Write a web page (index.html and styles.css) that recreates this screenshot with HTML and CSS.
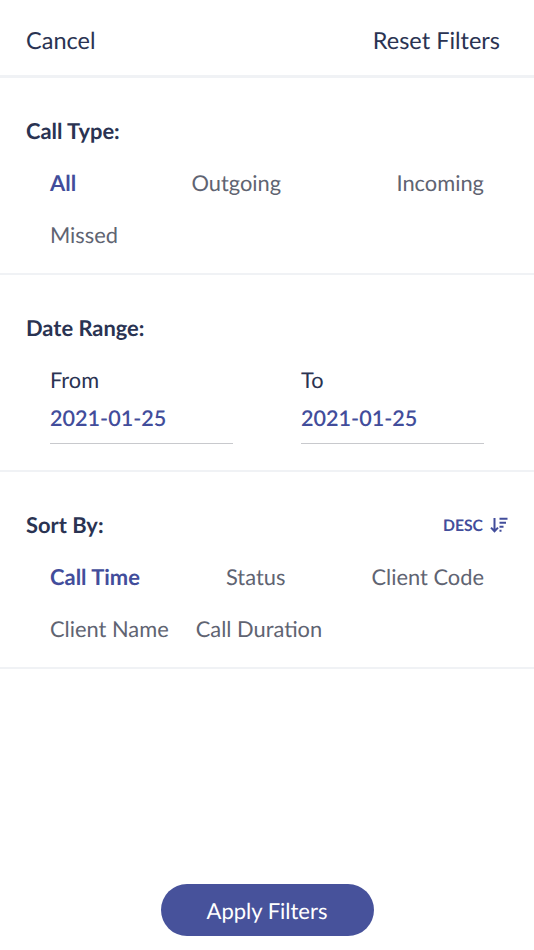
FILE: index.html
```html
<!DOCTYPE html>
<html lang="en">

<head>
    <meta charset="UTF-8">
    <meta name="viewport" content="width=device-width, initial-scale=1.0">
    <title>Filters</title>
    <link rel="stylesheet" href="styles.css">
</head>

<body>

    <div class="page">
        <div class="top-bar">
            <span>Cancel</span>
            <span>Reset Filters</span>
        </div>

        <!-- Call type -->
        <section class="filter-section">
            <div class="section-head">
                <h2>Call Type:</h2>
            </div>
            <div class="option-row spread">
                <span class="option active">All</span>
                <span class="option">Outgoing</span>
                <span class="option">Incoming</span>
            </div>
            <div class="option-row">
                <span class="option">Missed</span>
            </div>
        </section>

        <!-- Date range -->
        <section class="filter-section">
            <div class="section-head">
                <h2>Date Range:</h2>
            </div>
            <div class="date-row">
                <div class="date-field">
                    <div class="date-label">From</div>
                    <div class="date-value">2021-01-25</div>
                </div>
                <div class="date-field">
                    <div class="date-label">To</div>
                    <div class="date-value">2021-01-25</div>
                </div>
            </div>
        </section>

        <!-- Sort -->
        <section class="filter-section">
            <div class="section-head">
                <h2>Sort By:</h2>
                <div class="sort-order">
                    <span>DESC</span>
                    <svg width="18" height="16" viewBox="0 0 18 16" fill="none" stroke="#424d9b" stroke-width="2">
                        <path d="M4.5 1V14M1 10.6L4.5 14.2L8 10.6"/>
                        <path d="M9.5 1.8H17.5M9.5 5.8H16M9.5 9.8H13.5M9.5 13.8H11.5"/>
                    </svg>
                </div>
            </div>
            <div class="option-row spread">
                <span class="option active">Call Time</span>
                <span class="option">Status</span>
                <span class="option">Client Code</span>
            </div>
            <div class="option-row">
                <span class="option">Client Name</span>
                <span class="option">Call Duration</span>
            </div>
        </section>

        <div class="apply-wrap">
            <button type="button">Apply Filters</button>
        </div>
    </div>

</body>
</html>
```

FILE: styles.css
```css
body {
    font-family: 'Lato', sans-serif;
    margin: 0;
    padding: 0;
    background-color: #fff;
    text-rendering: geometricPrecision;
}

.page {
    height: 950px;
    display: flex;
    flex-direction: column;
}

.top-bar {
    display: flex;
    justify-content: space-between;
    align-items: center;
    height: 78px;
    padding: 7px 34px 0 26px;
    box-sizing: border-box;
    border-bottom: 3px solid #f0f2f5;
    font-size: 23.5px;
    color: #2a3352;
}

.filter-section {
    padding: 0 50px 12px 26px;
    border-bottom: 2px solid #f0f2f5;
}

.section-head {
    display: flex;
    justify-content: space-between;
    align-items: center;
    height: 30px;
    padding: 38px 0 11px;
    margin-right: -24px;
}

h2 {
    margin: 0;
    font-size: 21.9px;
    line-height: 28px;
    font-weight: 700;
    color: #2a3352;
}

.option-row {
    display: flex;
    gap: 27px;
    align-items: center;
    height: 52px;
    padding-left: 24px;
    font-size: 21.85px;
    line-height: 28px;
    color: #5f6472;
}

.spread {
    justify-content: space-between;
}

.active {
    color: #424d9b;
    font-size: 21.95px;
    font-weight: 700;
}

.sort-order {
    display: flex;
    align-items: center;
    gap: 7px;
    font-size: 15.75px;
    font-weight: 700;
    color: #424d9b;
}

.date-row {
    display: flex;
    gap: 68px;
    padding: 12px 0 14px 24px;
}

.date-field {
    width: 183px;
    border-bottom: 1px solid #c8c9cd;
}

.date-label {
    font-size: 21.75px;
    line-height: 28px;
    color: #2a3352;
}

.date-value {
    font-size: 21.6px;
    line-height: 28px;
    font-weight: 600;
    color: #424d9b;
    padding: 10px 0 11px;
}

.apply-wrap {
    margin-top: auto;
    display: flex;
    justify-content: center;
    padding-bottom: 14px;
}

button {
    width: 213px;
    height: 52px;
    background-color: #47529b;
    color: #fff;
    font-family: 'Lato', sans-serif;
    font-size: 22px;
    text-rendering: geometricPrecision;
    border: none;
    border-radius: 26px;
}
```
